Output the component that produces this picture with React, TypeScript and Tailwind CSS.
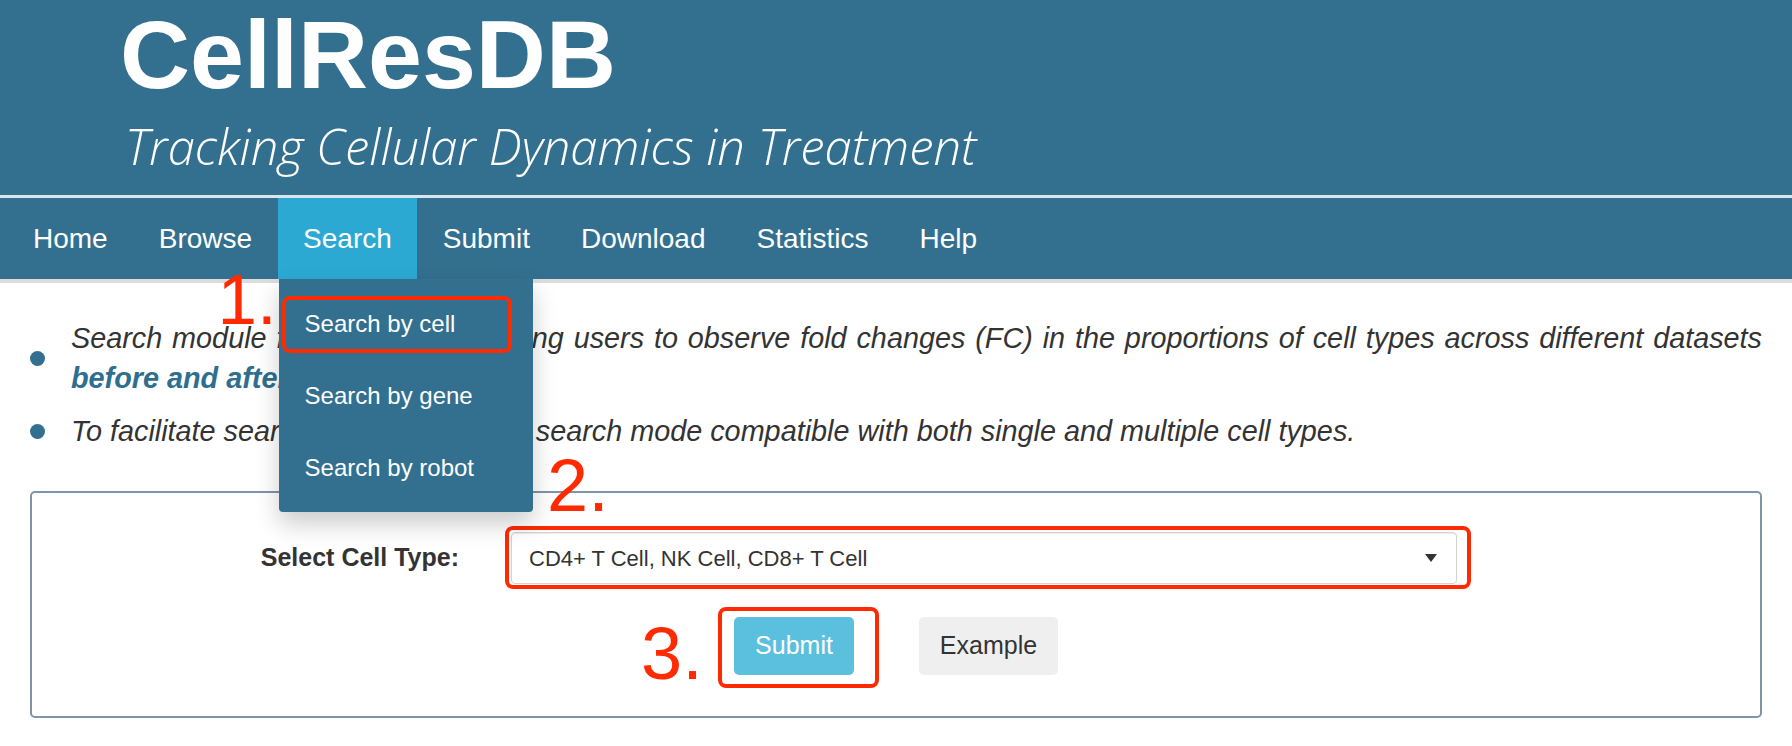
import React from 'react';

const navItems = ['Home', 'Browse', 'Search', 'Submit', 'Download', 'Statistics', 'Help'];
const searchMenu = ['Search by cell', 'Search by gene', 'Search by robot'];

function SearchDropdown() {
  return (
    <div className="absolute left-[1px] top-full w-[254px] rounded-b-[4px] bg-[#33708f] pt-[9px] pb-[8px] shadow-[0_12px_24px_rgba(0,0,0,0.2)]">
      {/* annotation 1 */}
      <span className="absolute -left-[61px] -top-[15px] text-[71px] leading-[71px] text-[#ff2a00]">1.</span>
      {searchMenu.map((label, i) => (
        <div key={label} className="relative flex h-[72px] items-center px-[26px] text-[24px] text-white">
          {label}
          {i === 0 && (
            <div className="absolute left-[3px] top-[8px] h-[57px] w-[230px] rounded-[8px] border-4 border-[#ff2a00]" />
          )}
        </div>
      ))}
    </div>
  );
}

export default function App() {
  return (
    <div className="min-h-screen bg-white font-['Liberation_Sans',Arial,sans-serif] text-[#333]">
      {/* Header */}
      <header className="h-[195px] bg-[#33708f]">
        <h1 className="pl-[120px] pt-[6px] text-[97px] font-bold leading-[97px] text-white">CellResDB</h1>
        <p className="mt-[19px] pl-[125px] font-['Open_Sans',sans-serif] text-[49px] font-light italic leading-[49px] text-white">
          Tracking Cellular Dynamics in Treatment
        </p>
      </header>
      <div className="h-[3px] bg-[#d9e6ee]" />

      {/* Nav */}
      <nav className="relative z-10 h-[81px] bg-[#33708f] pl-[7.5px]">
        <ul className="flex h-full">
          {navItems.map((item) => (
            <li
              key={item}
              className={
                item === 'Search'
                  ? 'relative flex h-full items-center bg-[#2ba9d3] px-[25.5px] text-[28px] text-white'
                  : 'relative flex h-full items-center px-[25.5px] text-[28px] text-white'
              }
            >
              {item}
              {item === 'Search' && <SearchDropdown />}
            </li>
          ))}
        </ul>
      </nav>
      <div className="h-[4px] bg-[#dcdcdc]" />

      {/* Content */}
      <main className="px-[30px] pt-[35px]">
        <ul className="flex flex-col gap-[13px]">
          <li className="flex items-center">
            <span className="h-[15px] w-[15px] shrink-0 rounded-full bg-[#33708f]" />
            <p className="ml-[26px] flex-1 text-justify text-[28.8px] italic leading-[40px]">
              Search module for cell types, allowing users to observe fold changes (FC) in the proportions of cell types across
              different datasets <b className="text-[#2e6e8e]">before and after treatment</b>.
            </p>
          </li>
          <li className="flex items-center">
            <span className="h-[15px] w-[15px] shrink-0 rounded-full bg-[#33708f]" />
            <p className="ml-[26px] flex-1 text-[28.8px] italic leading-[40px]">
              To facilitate searching, we provide a search mode compatible with both single and multiple cell types.
            </p>
          </li>
        </ul>

        <div className="mt-[40px] rounded-[5px] border-2 border-[#7f93a9] pb-[41px] pt-[39px]">
          <div className="flex items-center">
            <label className="w-[427px] text-right text-[25px] font-bold">Select Cell Type:</label>
            <div className="relative ml-[52px] w-[946px]">
              <span className="absolute -top-[83px] left-[36px] text-[74px] leading-[74px] text-[#ff2a00]">2.</span>
              <div className="flex h-[52px] items-center justify-between rounded-[4px] border border-[#d2d2d2] pl-[17px] pr-[19px] text-[22px] shadow-[inset_0_1px_1px_rgba(0,0,0,0.075)]">
                <span>CD4+ T Cell, NK Cell, CD8+ T Cell</span>
                <svg width="12" height="8" viewBox="0 0 12 8">
                  <path d="M0 0H12L6 8Z" fill="#333" />
                </svg>
              </div>
              <div className="absolute -bottom-[5px] -left-[6px] -right-[14px] -top-[6px] rounded-[8px] border-4 border-[#ff2a00]" />
            </div>
          </div>

          <div className="mt-[33px] flex justify-center gap-[65px]">
            <div className="relative">
              <span className="absolute -left-[93px] top-0 text-[74px] leading-[74px] text-[#ff2a00]">3.</span>
              <button className="h-[58px] w-[120px] rounded-[5px] bg-[#5bc0de] text-[25px] text-white">Submit</button>
              <div className="absolute -bottom-[13px] -left-[16px] -right-[25px] -top-[10px] rounded-[8px] border-4 border-[#ff2a00]" />
            </div>
            <button className="h-[58px] w-[139px] rounded-[5px] bg-[#efefef] text-[25px] text-[#333]">Example</button>
          </div>
        </div>
      </main>
    </div>
  );
}
